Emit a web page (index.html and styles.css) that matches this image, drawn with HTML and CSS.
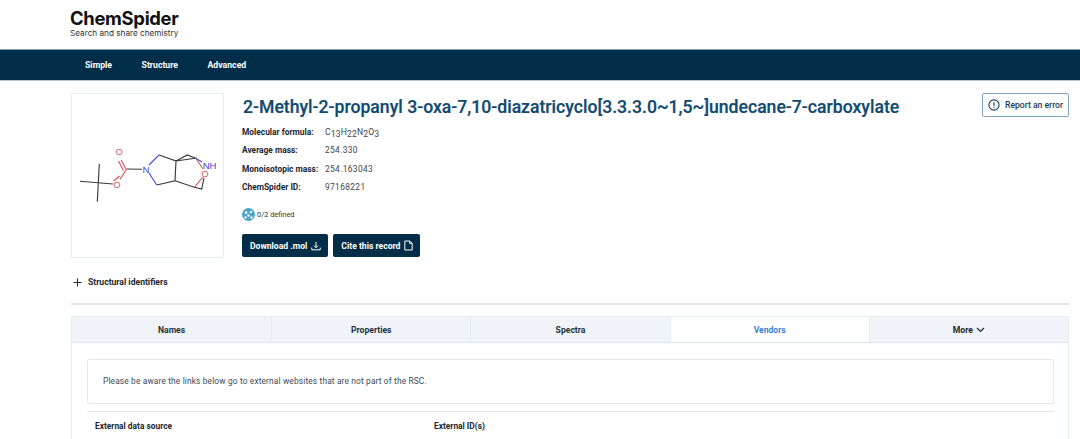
FILE: index.html
```html
<!DOCTYPE html>
<html lang="en">
<head>
<meta charset="utf-8">
<title>ChemSpider</title>
<link rel="stylesheet" href="styles.css">
</head>
<body>
<header class="brand">
  <div class="logo">ChemSpider</div>
  <div class="tagline">Search and share chemistry</div>
</header>
<nav class="nav">
  <a>Simple</a><a>Structure</a><a>Advanced</a>
</nav>
<main class="main">
  <section class="record">
    <div class="structure">
      <svg class="mol" viewBox="72 94 150 162" width="150" height="162">
        <g class="bond">
          <path d="M80 181.300L97.700 182.700M99.300 164L97.300 201.700M97.700 182.700L113 184"/>
          <path d="M159 155L176 161L175 180.700L156.700 185"/>
          <path d="M176 161L187.300 155L195.700 158.300M176 161L197 158M175 180.700L194.300 187.300L201.700 189L204 178"/>
          <path d="M126.700 169L142 169.300"/>
        </g>
        <g class="bond-o">
          <path d="M113.500 181L119.500 176"/>
          <path d="M126 169L121 160M123.500 170.500L118.500 161"/>
          <path d="M196 158.500L203 169M194.300 187.300L203 177"/>
        </g>
        <g class="bond-n">
          <path d="M149 165L159 155M149 173L156.700 185M195.700 158.300L202 162"/>
        </g>
        <path class="bond-mix" d="M120 179.500L126.700 169"/>
        <text class="atom o" x="119.300" y="155.200">O</text>
        <text class="atom o" x="117" y="187.800">O</text>
        <text class="atom n" x="146" y="172.800">N</text>
        <text class="atom n" x="209.500" y="168.700">NH</text>
        <text class="atom o" x="205" y="176.500">O</text>
      </svg>
    </div>
    <div class="summary">
      <h1 class="title">2-Methyl-2-propanyl 3-oxa-7,10-diazatricyclo[3.3.3.0~1,5~]undecane-7-carboxylate</h1>
      <dl class="facts">
        <div class="fact"><dt>Molecular formula:</dt><dd class="formula">C<sub>13</sub>H<sub>22</sub>N<sub>2</sub>O<sub>3</sub></dd></div>
        <div class="fact"><dt>Average mass:</dt><dd>254.330</dd></div>
        <div class="fact"><dt>Monoisotopic mass:</dt><dd>254.163043</dd></div>
        <div class="fact"><dt>ChemSpider ID:</dt><dd>97168221</dd></div>
      </dl>
      <div class="stereo">
        <svg width="13" height="13" viewBox="0 0 13 13"><circle cx="6.500" cy="6.500" r="6.500" fill="#4ba3c7"/><g fill="#e8f4f8"><circle cx="4" cy="4.500" r="1.500"/><circle cx="9" cy="4" r="1.300"/><circle cx="6.500" cy="7.500" r="1.300"/><circle cx="3.500" cy="9.500" r="1.200"/><circle cx="9.500" cy="9.500" r="1.300"/></g></svg>
        <span>0/2 defined</span>
      </div>
      <div class="actions">
        <button class="btn">Download .mol
          <svg width="10" height="10" viewBox="0 0 13 13" fill="none" stroke="#fff" stroke-width="1.300"><path d="M6.500 1V8.500M3.800 6L6.500 8.700L9.200 6M1 8.500V11.500H12V8.500"/></svg>
        </button>
        <button class="btn">Cite this record
          <svg width="9" height="11" viewBox="0 0 11 13" fill="none" stroke="#fff" stroke-width="1.200"><path d="M1 1H7L10 4V12H1ZM7 1V4H10"/></svg>
        </button>
      </div>
    </div>
    <button class="report">
      <svg width="12" height="12" viewBox="0 0 13 13" fill="none" stroke="#15405c" stroke-width="1.200"><circle cx="6.500" cy="6.500" r="5.500"/><path d="M6.500 3.500V7.500M6.500 8.600V9.800"/></svg>
      Report an error
    </button>
  </section>
  <div class="identifiers">
    <svg width="9" height="9" viewBox="0 0 10 10" stroke="#222" stroke-width="1.100"><path d="M5 0.500V9.500M0.500 5H9.500"/></svg>
    <span>Structural identifiers</span>
  </div>
  <section class="panel">
    <div class="tabs">
      <div class="tab">Names</div>
      <div class="tab">Properties</div>
      <div class="tab">Spectra</div>
      <div class="tab active">Vendors</div>
      <div class="tab more">More
        <svg width="9" height="6" viewBox="0 0 9 6" fill="none" stroke="#222" stroke-width="1.100"><path d="M1 1L4.500 4.500L8 1"/></svg>
      </div>
    </div>
    <div class="panel-body">
      <div class="notice">Please be aware the links below go to external websites that are not part of the RSC.</div>
      <div class="table-head">
        <div class="col-source">External data source</div>
        <div>External ID(s)</div>
      </div>
    </div>
  </section>
</main>
</body>
</html>
```
FILE: styles.css
```css
* { box-sizing: border-box; }
html, body { margin: 0; height: 439px; overflow: hidden; background: #fff; }
body { font-family: Roboto, "Liberation Sans", sans-serif; color: #1c2730; }

.brand { height: 49px; padding: 9px 0 0 70px; }
.logo { font-family: Inter, "Liberation Sans", sans-serif; font-size: 18.400px; font-weight: 700; line-height: 19px; letter-spacing: -0.300px; color: #111; }
.tagline { font-family: Inter, "Liberation Sans", sans-serif; font-size: 8.200px; line-height: 10px; margin-top: 0; color: #333; }

.nav { height: 32px; background: #002d47; border-top: 1px solid #7fa0b3; border-bottom: 1px solid #b8c8d2; display: flex; align-items: center; gap: 29.500px; padding-left: 85px; }
.nav a { color: #fff; font-size: 8.700px; font-weight: 700; }

.main { padding: 12px 11px 0 71px; }
.record { display: flex; height: 165px; }
.structure { width: 153px; height: 165px; border: 1px solid #e6edf1; flex: none; }
.mol { display: block; }
.bond, .bond-o, .bond-n, .bond-mix { fill: none; stroke-width: 1.150; }
.bond { stroke: #3a3a3a; }
.bond-o { stroke: #e0555a; }
.bond-n { stroke: #4a50d8; }
.bond-mix { stroke: #e0555a; }
.atom { font-size: 9.500px; text-anchor: middle; font-family: "Liberation Sans", sans-serif; }
.atom.o { fill: #e0555a; }
.atom.n { fill: #4040d8; }

.summary { margin-left: 18px; flex: none; width: 680px; }
.title { margin: 0 0 0 1px; font-size: 17.630px; line-height: 28px; font-weight: 500; -webkit-text-stroke: 0.200px #0f4a70; color: #0f4a70; white-space: nowrap; }
.facts { margin: 2px 0 0; }
.fact { display: flex; height: 18.300px; align-items: center; font-size: 8.400px; }
.fact dt { width: 83px; font-weight: 700; flex: none; color: #1c2730; }
.fact dd { margin: 0; color: #444; font-size: 8.400px; letter-spacing: 0.350px; }
.fact .formula { font-size: 8.600px; letter-spacing: 0.150px; }
.formula sub { font-size: 8.600px; vertical-align: -2px; line-height: 0; }

.stereo { display: flex; align-items: center; gap: 2px; margin-top: 12px; font-size: 7.400px; color: #333; height: 13px; }
.actions { display: flex; gap: 5px; margin-top: 13px; }
.btn { height: 23px; border: 0; border-radius: 2px; background: #002d47; color: #fff; font: 700 8.600px Roboto, "Liberation Sans", sans-serif; display: flex; align-items: center; gap: 4px; padding: 0 7px 0 8px; }
.report { margin-left: auto; align-self: flex-start; width: 87px; height: 24px; flex: none; background: #fff; border: 1px solid #7fa3ba; border-radius: 2px; display: flex; align-items: center; justify-content: center; gap: 5px; padding: 0; color: #15405c; font: 500 8.600px Roboto, "Liberation Sans", sans-serif; }

.identifiers { display: flex; align-items: center; gap: 6px; height: 47px; padding: 3px 0 0 2px; border-bottom: 2px solid #dfe5ea; font-size: 8.600px; font-weight: 700; }

.panel { margin-top: 11px; border: 1px solid #e6edf1; border-bottom: 0; height: 141px; }
.tabs { display: grid; grid-template-columns: repeat(5, 1fr); height: 26px; }
.tab { background: #f0f4f8; border-bottom: 1px solid #dde5ea; border-left: 1px solid #e6edf1; display: flex; align-items: center; justify-content: center; gap: 3px; font-size: 8.600px; font-weight: 700; color: #23323d; }
.tab:first-child { border-left: 0; }
.tab.active { background: #fff; color: #2a78cc; font-weight: 600; }
.tab.more { color: #222; }

.panel-body { padding: 16px 14px 0 15px; }
.notice { height: 45px; border: 1px solid #e3e9ed; border-radius: 2px; display: flex; align-items: center; padding: 0 0 2px 15px; font-size: 8.400px; color: #3c4a55; letter-spacing: 0.135px; }
.table-head { display: flex; margin-top: 7px; border-top: 1px solid #dfe5ea; padding: 9px 0 0 8px; font-size: 8.400px; font-weight: 700; }
.col-source { width: 339px; }
```
